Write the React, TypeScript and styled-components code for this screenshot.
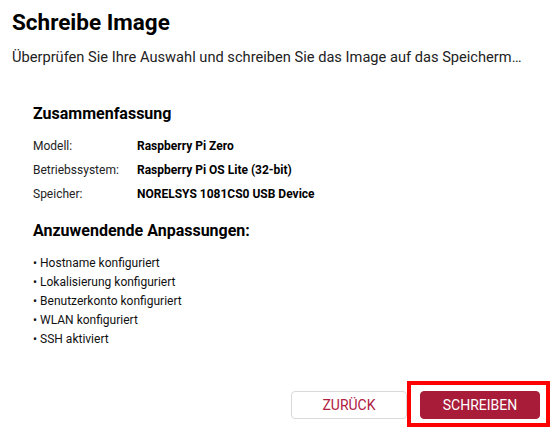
import React from "react";
import styled, { createGlobalStyle } from "styled-components";

const Global = createGlobalStyle`
  html, body { margin: 0; padding: 0; background: #ffffff; }
  body { font-family: Roboto, "Noto Sans", "Liberation Sans", sans-serif; color: #000; }
  * { box-sizing: border-box; }
`;

const Page = styled.div`
  width: 557px;
  height: 431px;
  padding: 8px 17px 12px 12px;
  display: flex;
  flex-direction: column;
`;

const Title = styled.h1`
  margin: 0;
  font-size: 22.5px;
  line-height: 29px;
  font-weight: 700;
  color: #000;
`;

const Subtitle = styled.p`
  margin: 11px 0 0;
  font-size: 14.65px;
  line-height: 18px;
  color: #222;
  white-space: nowrap;
  overflow: hidden;
  text-overflow: ellipsis;
  max-width: 514px;
`;

const Content = styled.div`
  padding: 0 0 0 21px;
  margin-top: 38px;
  display: flex;
  flex-direction: column;
`;

const SectionTitle = styled.h2<{ $top?: number }>`
  margin: ${(p) => p.$top ?? 0}px 0 0;
  font-size: 16px;
  line-height: 20px;
  font-weight: 700;
  color: #000;
`;

const Summary = styled.div`
  display: grid;
  grid-template-columns: 104px auto;
  grid-auto-rows: 24px;
  align-items: center;
  margin-top: 10px;
  font-size: 12px;
`;

const Label = styled.span`
  color: #222;
`;

const Value = styled.span`
  font-weight: 700;
  color: #000;
`;

const List = styled.ul`
  list-style: none;
  margin: 13px 0 0;
  padding: 0;
  font-size: 12px;
  line-height: 19px;
  color: #111;
`;

const Item = styled.li`
  &::before {
    content: "•";
    margin-right: 3px;
  }
`;

const Footer = styled.div`
  margin-top: auto;
  display: flex;
  justify-content: flex-end;
  gap: 13px;
`;

const Button = styled.button<{ $primary?: boolean }>`
  height: 28px;
  width: ${(p) => (p.$primary ? 120 : 116)}px;
  border-radius: 4px;
  font-family: Roboto, "Noto Sans", "Liberation Sans", sans-serif;
  font-size: 14px;
  text-transform: uppercase;
  cursor: pointer;
  border: 1px solid ${(p) => (p.$primary ? "#a81c3a" : "#d9d9d9")};
  background: ${(p) => (p.$primary ? "#a81c3a" : "#ffffff")};
  color: ${(p) => (p.$primary ? "#ffffff" : "#b0203f")};
`;

const Highlight = styled.div`
  position: relative;
  display: flex;
  &::after {
    content: "";
    position: absolute;
    top: -10px;
    left: -13px;
    right: -10px;
    bottom: -8px;
    border: 4px solid #ff0000;
    pointer-events: none;
  }
`;

const summary: [string, string][] = [
  ["Modell:", "Raspberry Pi Zero"],
  ["Betriebssystem:", "Raspberry Pi OS Lite (32-bit)"],
  ["Speicher:", "NORELSYS 1081CS0 USB Device"],
];

const items = [
  "Hostname konfiguriert",
  "Lokalisierung konfiguriert",
  "Benutzerkonto konfiguriert",
  "WLAN konfiguriert",
  "SSH aktiviert",
];

export default function App() {
  return (
    <>
      <Global />
      <Page>
        <Title>Schreibe Image</Title>
        <Subtitle>
          Überprüfen Sie Ihre Auswahl und schreiben Sie das Image auf das Speichermedium.
        </Subtitle>
        <Content>
          <SectionTitle>Zusammenfassung</SectionTitle>
          <Summary>
            {summary.map(([k, v]) => (
              <React.Fragment key={k}>
                <Label>{k}</Label>
                <Value>{v}</Value>
              </React.Fragment>
            ))}
          </Summary>
          <SectionTitle $top={15}>Anzuwendende Anpassungen:</SectionTitle>
          <List>
            {items.map((i) => (
              <Item key={i}>{i}</Item>
            ))}
          </List>
        </Content>
        <Footer>
          <Button>Zurück</Button>
          <Highlight>
            <Button $primary>Schreiben</Button>
          </Highlight>
        </Footer>
      </Page>
    </>
  );
}
